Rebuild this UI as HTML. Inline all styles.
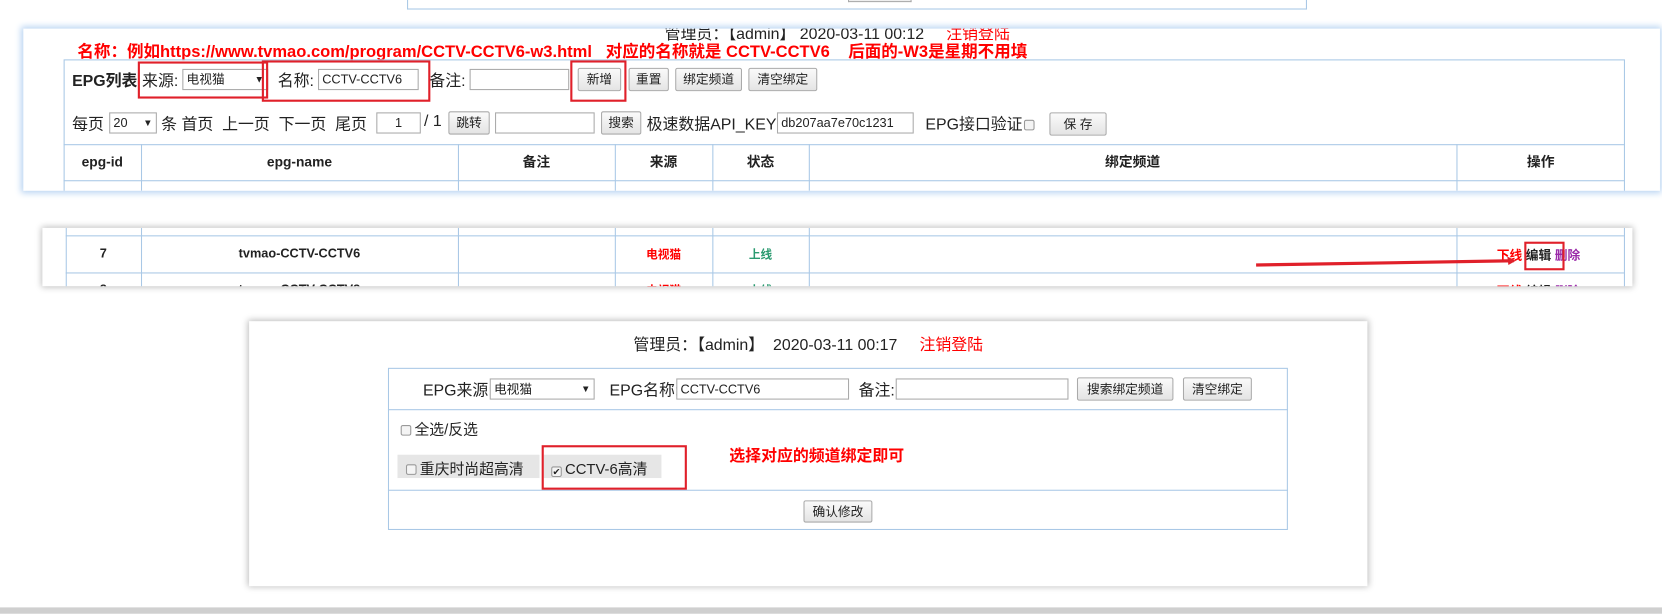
<!DOCTYPE html>
<html><head><meta charset="utf-8"><style>
*{box-sizing:border-box;margin:0;padding:0}
html,body{width:1662px;height:613px;overflow:hidden;background:#fff}
body{font-family:"Liberation Sans","Noto Sans CJK SC",sans-serif;font-size:14px;color:#222}
#w{position:absolute;left:0;top:0;width:1568px;height:578px;transform:scale(1.06);transform-origin:0 0}
.a{position:absolute;white-space:nowrap}
.inp{position:absolute;border:1px solid #aaa;background:#fff;font-size:12px;padding:1px 3px;height:20px;line-height:16px}
.btn{position:absolute;border:1px solid #aaa;background:linear-gradient(#fafafa,#e4e4e4);font-size:12px;height:22px;line-height:20px;text-align:center;border-radius:2px}
.rb{position:absolute;border:2px solid #e0202a}
.vl{position:absolute;width:1px;background:#a9c8e6}
.hl{position:absolute;height:1px;background:#a9c8e6}
.red{color:#f00}
.th{position:absolute;top:116px;height:20px;line-height:20px;text-align:center;font-weight:bold;font-size:13px}
.chk{display:inline-block;width:10px;height:10px;border:1px solid #999;background:#f4f4f4;border-radius:2px;vertical-align:-1px;margin-right:3px;font-size:9px;line-height:8px;text-align:center}
</style></head><body><div id="w">

<div class="a" style="left:384px;top:-2px;width:849px;height:11px;border:1px solid #a9c8e6;border-top:none"></div>
<div class="a" style="left:800px;top:-2px;width:60px;height:4px;border:1px solid #aaa;border-top:none;background:#eee"></div>

<div class="a" style="left:22px;top:27px;width:1544px;height:153px;background:#fff;box-shadow:0 0 6px 2px #b7d3f2;overflow:hidden">
 <div class="a" style="left:605px;top:-6px;font-size:15px">管理员：【admin】 2020-03-11 00:12 &nbsp;&nbsp;&nbsp;&nbsp;<span class="red">注销登陆</span></div>
 <div class="a red" style="left:51px;top:10px;font-size:15.6px;font-weight:bold">名称：例如https://www.tvmao.com/program/CCTV-CCTV6-w3.html &nbsp;&nbsp;对应的名称就是 CCTV-CCTV6 &nbsp;&nbsp;&nbsp;后面的-W3是星期不用填</div>
 <div class="a" style="left:38px;top:29px;width:1473px;height:140px;border:1px solid #a9c8e6"></div>
 <div class="a" style="left:46px;top:38px;font-size:15px;font-weight:bold">EPG列表</div>
 <div class="a" style="left:112px;top:38px;font-size:15px">来源:</div>
 <div class="inp" style="left:150px;top:38px;width:81px">电视猫<span style="float:right;font-size:9px">▼</span></div>
 <div class="a" style="left:240px;top:38px;font-size:15px">名称:</div>
 <div class="inp" style="left:278px;top:38px;width:95px">CCTV-CCTV6</div>
 <div class="a" style="left:383px;top:38px;font-size:15px">备注:</div>
 <div class="inp" style="left:421px;top:38px;width:94px"></div>
 <div class="btn" style="left:523px;top:37px;width:41px">新增</div>
 <div class="btn" style="left:571px;top:37px;width:38px">重置</div>
 <div class="btn" style="left:615px;top:37px;width:63px">绑定频道</div>
 <div class="btn" style="left:684px;top:37px;width:65px">清空绑定</div>
 <div class="rb" style="left:108px;top:31px;width:123px;height:35px"></div>
 <div class="rb" style="left:225px;top:30px;width:159px;height:39px"></div>
 <div class="rb" style="left:516px;top:30px;width:53px;height:39px"></div>
 <div class="a" style="left:46px;top:79px;font-size:15px">每页</div>
 <div class="inp" style="left:81px;top:79px;width:45px">20<span style="float:right;font-size:9px">▼</span></div>
 <div class="a" style="left:130px;top:79px;font-size:15px">条 首页 &nbsp;上一页 &nbsp;下一页 &nbsp;尾页</div>
 <div class="inp" style="left:333px;top:79px;width:42px;text-align:center">1</div>
 <div class="a" style="left:378px;top:79px;font-size:15px">/ 1</div>
 <div class="btn" style="left:401px;top:78px;width:39px">跳转</div>
 <div class="inp" style="left:445px;top:79px;width:94px"></div>
 <div class="btn" style="left:545px;top:78px;width:38px">搜索</div>
 <div class="a" style="left:588px;top:79px;font-size:15px">极速数据API_KEY</div>
 <div class="inp" style="left:711px;top:79px;width:129px">db207aa7e70c1231</div>
 <div class="a" style="left:851px;top:79px;font-size:15px">EPG接口验证</div>
 <div class="a" style="left:944px;top:82px"><span class="chk"></span></div>
 <div class="btn" style="left:968px;top:79px;width:54px">保 存</div>
 <div class="hl" style="left:38px;top:109px;width:1473px"></div>
 <div class="hl" style="left:38px;top:143px;width:1473px"></div>
 <div class="vl" style="left:111px;top:109px;height:44px"></div>
 <div class="vl" style="left:410px;top:109px;height:44px"></div>
 <div class="vl" style="left:558px;top:109px;height:44px"></div>
 <div class="vl" style="left:650px;top:109px;height:44px"></div>
 <div class="vl" style="left:741px;top:109px;height:44px"></div>
 <div class="vl" style="left:1352px;top:109px;height:44px"></div>
 <div class="th" style="left:38px;width:73px">epg-id</div>
 <div class="th" style="left:111px;width:299px">epg-name</div>
 <div class="th" style="left:410px;width:148px">备注</div>
 <div class="th" style="left:558px;width:92px">来源</div>
 <div class="th" style="left:650px;width:91px">状态</div>
 <div class="th" style="left:741px;width:611px">绑定频道</div>
 <div class="th" style="left:1352px;width:159px">操作</div>
</div>

<div class="a" style="left:40px;top:215px;width:1500px;height:55px;background:#fff;box-shadow:0 0 6px 1px #bbb;overflow:hidden">
 <div class="a" style="left:22px;top:0;width:1471px;height:60px;border-left:1px solid #a9c8e6;border-right:1px solid #a9c8e6"></div>
 <div class="hl" style="left:22px;top:7px;width:1471px"></div>
 <div class="hl" style="left:22px;top:42px;width:1471px"></div>
 <div class="vl" style="left:93px;top:0;height:60px"></div>
 <div class="vl" style="left:392px;top:0;height:60px"></div>
 <div class="vl" style="left:540px;top:0;height:60px"></div>
 <div class="vl" style="left:632px;top:0;height:60px"></div>
 <div class="vl" style="left:723px;top:0;height:60px"></div>
 <div class="vl" style="left:1334px;top:0;height:60px"></div>
 <div class="a" style="left:22px;top:17px;width:71px;text-align:center;font-weight:bold;font-size:12px">7</div>
 <div class="a" style="left:93px;top:17px;width:299px;text-align:center;font-weight:bold;font-size:12px">tvmao-CCTV-CCTV6</div>
 <div class="a red" style="left:540px;top:17px;width:92px;text-align:center;font-weight:bold;font-size:11px">电视猫</div>
 <div class="a" style="left:632px;top:17px;width:91px;text-align:center;font-weight:bold;font-size:11px;color:#2a9a70">上线</div>
 <div class="a" style="left:1372px;top:17px;font-size:12px;font-weight:bold"><span class="red">下线</span> <span>编辑</span> <span style="color:#9a2aa8">删除</span></div>
 <div class="rb" style="left:1398px;top:13px;width:38px;height:27px"></div>
 <div class="a" style="left:22px;top:51px;width:71px;text-align:center;font-weight:bold;font-size:12px">8</div>
 <div class="a" style="left:93px;top:51px;width:299px;text-align:center;font-weight:bold;font-size:12px">tvmao-CCTV-CCTV8</div>
 <div class="a red" style="left:540px;top:51px;width:92px;text-align:center;font-weight:bold;font-size:11px">电视猫</div>
 <div class="a" style="left:632px;top:51px;width:91px;text-align:center;font-weight:bold;font-size:11px;color:#2a9a70">上线</div>
 <div class="a" style="left:1372px;top:51px;font-size:12px;font-weight:bold"><span class="red">下线</span> 编辑 <span style="color:#9a2aa8">删除</span></div>
 <svg class="a" style="left:1140px;top:25px" width="260" height="12"><line x1="5" y1="10" x2="248" y2="6" stroke="#e0202a" stroke-width="3"/><polygon points="250,6 242,2 243,10" fill="#e0202a"/></svg>
</div>

<div class="a" style="left:235px;top:303px;width:1055px;height:250px;background:#fff;box-shadow:0 0 6px 1px #bbb">
 <div class="a" style="left:0;top:11px;width:1055px;text-align:center;font-size:15px">管理员：【admin】 &nbsp;2020-03-11 00:17 &nbsp;&nbsp;&nbsp;&nbsp;<span class="red">注销登陆</span></div>
 <div class="a" style="left:131px;top:44px;width:849px;height:153px;border:1px solid #a9c8e6"></div>
 <div class="hl" style="left:131px;top:83px;width:849px"></div>
 <div class="hl" style="left:131px;top:159px;width:849px"></div>
 <div class="a" style="left:164px;top:54px;font-size:15px">EPG来源:</div>
 <div class="inp" style="left:227px;top:54px;width:99px">电视猫<span style="float:right;font-size:9px">▼</span></div>
 <div class="a" style="left:340px;top:54px;font-size:15px">EPG名称:</div>
 <div class="inp" style="left:403px;top:54px;width:163px">CCTV-CCTV6</div>
 <div class="a" style="left:575px;top:54px;font-size:15px">备注:</div>
 <div class="inp" style="left:610px;top:54px;width:163px"></div>
 <div class="btn" style="left:781px;top:53px;width:91px">搜索绑定频道</div>
 <div class="btn" style="left:881px;top:53px;width:65px">清空绑定</div>
 <div class="a" style="left:143px;top:92px;font-size:14px"><span class="chk"></span>全选/反选</div>
 <div class="a" style="left:140px;top:126px;width:134px;height:22px;background:#e6e6e6;padding:3px 0 0 8px;font-size:14px"><span class="chk"></span>重庆时尚超高清</div>
 <div class="a" style="left:278px;top:126px;width:111px;height:22px;background:#e6e6e6;padding:3px 0 0 7px;font-size:14px"><span class="chk">✔</span>CCTV-6高清</div>
 <div class="rb" style="left:276px;top:117px;width:137px;height:42px"></div>
 <div class="a red" style="left:453px;top:116px;font-size:15px;font-weight:bold">选择对应的频道绑定即可</div>
 <div class="btn" style="left:523px;top:169px;width:65px;height:21px">确认修改</div>
</div>

<div class="a" style="left:0;top:573px;width:1568px;height:6px;background:#cfcfcf"></div>
</div></body></html>
